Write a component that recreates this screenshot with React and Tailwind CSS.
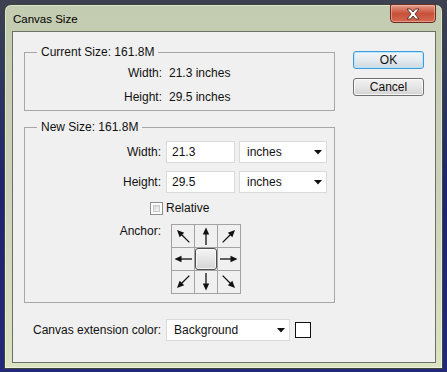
import React from "react";

const font = "font-['Liberation_Sans',Arial,sans-serif]";

function Arrow({ rotate }) {
  return (
    <svg width="22" height="22" viewBox="0 0 22 22">
      <g transform={`rotate(${rotate} 11 11)`}>
        <line x1="11" y1="20" x2="11" y2="7" stroke="#111" strokeWidth="1.3" />
        <polygon points="7.8,9.5 11,2.5 14.2,9.5" fill="#111" />
      </g>
    </svg>
  );
}

function Select({ value, width }) {
  return (
    <div
      className={`${width} h-[22px] flex items-center justify-between pl-[7px] pr-[4px] bg-white border border-[#dadada]`}
    >
      <span>{value}</span>
      <svg width="8" height="5" viewBox="0 0 8 5">
        <polygon points="0,0 8,0 4,4.5" fill="#111" />
      </svg>
    </div>
  );
}

function Field({ label, value, unit }) {
  return (
    <div className="flex items-center">
      <span className="w-[136px] text-right">{label}</span>
      <div className="ml-[5px] w-[69px] h-[22px] flex items-center pl-[5px] bg-white border border-[#dadada]">
        {value}
      </div>
      <div className="ml-[4px]">
        <Select value={unit} width="w-[88px]" />
      </div>
    </div>
  );
}

export default function App() {
  const anchors = [-45, 0, 45, -90, null, 90, -135, 180, 135];

  return (
    <div
      className={`${font} w-[447px] h-[372px] overflow-hidden pt-[4px] pl-[4px] text-[12px] leading-[14px] text-[#111] bg-gradient-to-b from-[#3d4150] via-[#1e2470] to-[#23297a]`}
    >
      <div className="w-[439px] h-[365px] flex flex-col rounded-t-[7px] border border-[#3e4438] bg-gradient-to-b from-[#c3cbb0] via-[#ccd2ba] to-[#dce3c2] shadow-[inset_0_0_0_1px_rgba(255,255,255,0.45)] pl-[7px] pr-[6px] pb-[5px]">
        <div className="h-[26px] flex items-start justify-between">
          <span className="mt-[7px] ml-[1px] text-[11.5px] text-black">Canvas Size</span>
          <div className="w-[46px] h-[19px] -mt-[1px] flex items-center justify-center rounded-b-[4px] rounded-t-[2px] border border-[#6b2a20] bg-gradient-to-b from-[#e39a87] via-[#c8503a] to-[#d46a4f] shadow-[inset_0_0_0_1px_rgba(255,220,210,0.45)]">
            <svg width="14" height="12" viewBox="0 0 14 12">
              <polygon
                points="1,1 4.5,1 7,4 9.5,1 13,1 9,6 13,11 9.5,11 7,8 4.5,11 1,11 5,6"
                fill="#fff"
                stroke="#4a2a25"
                strokeWidth="0.9"
              />
            </svg>
          </div>
        </div>

        <div className="w-[424px] h-[332px] border border-[#6a7064] bg-[#f0f0f0] flex flex-col">
          <div className="flex items-start">
            <div className="ml-[11px] mt-[13px] w-[311px]">
              <fieldset className="border border-[#a7a7a7] pb-[6px] pt-[7px]">
                <legend className="ml-[12px] px-[4px]">Current Size: 161.8M</legend>
                <div className="flex flex-col gap-[10px]">
                  <div className="flex">
                    <span className="w-[137px] text-right">Width:</span>
                    <span className="ml-[7px]">21.3 inches</span>
                  </div>
                  <div className="flex">
                    <span className="w-[137px] text-right">Height:</span>
                    <span className="ml-[7px]">29.5 inches</span>
                  </div>
                </div>
              </fieldset>

              <fieldset className="mt-[9px] border border-[#a7a7a7] pt-[7px] pb-[8px]">
                <legend className="ml-[12px] px-[4px]">New Size: 161.8M</legend>
                <div className="flex flex-col gap-[8px]">
                  <Field label="Width:" value="21.3" unit="inches" />
                  <Field label="Height:" value="29.5" unit="inches" />
                </div>
                <div className="mt-[8px] ml-[125px] flex items-center gap-[3px]">
                  <div className="w-[13px] h-[13px] border border-[#8e8f8f] bg-white p-[2px]">
                    <div className="w-full h-full border border-[#c4c7cc] bg-gradient-to-br from-[#d3d6da] to-[#f7f7f7]" />
                  </div>
                  <span>Relative</span>
                </div>
                <div className="mt-[9px] flex items-start">
                  <span className="w-[136px] text-right">Anchor:</span>
                  <div className="ml-[10px] grid grid-cols-[22px_22px_22px] gap-px p-px bg-[#a3a3a3]">
                    {anchors.map((r, i) => (
                      <div key={i} className="w-[22px] h-[22px] bg-[#f0f0f0] flex items-center justify-center">
                        {r === null ? (
                          <div className="w-[22px] h-[22px] rounded-[3px] border border-[#4f4f4f] bg-gradient-to-b from-[#f5f5f5] to-[#d6d6d6] shadow-[inset_0_0_0_1px_rgba(255,255,255,0.7)]" />
                        ) : (
                          <Arrow rotate={r} />
                        )}
                      </div>
                    ))}
                  </div>
                </div>
              </fieldset>
            </div>

            <div className="ml-[18px] mt-[19px] flex flex-col gap-[9px]">
              <button className="w-[71px] h-[18px] flex items-center justify-center rounded-[3px] border border-[#3c9bd8] bg-gradient-to-b from-[#f2f6f8] via-[#e4ebef] to-[#cfd9df] shadow-[inset_0_0_0_1px_rgba(180,230,255,0.9)] text-[12px] leading-[14px]">
                OK
              </button>
              <button className="w-[71px] h-[18px] flex items-center justify-center rounded-[3px] border border-[#707070] bg-gradient-to-b from-[#f2f2f2] via-[#e6e6e6] to-[#d2d2d2] shadow-[inset_0_0_0_1px_rgba(255,255,255,0.8)] text-[12px] leading-[14px]">
                Cancel
              </button>
            </div>
          </div>

          <div className="mt-[16px] ml-[20px] flex items-center">
            <span>Canvas extension color:</span>
            <div className="ml-[5px]">
              <Select value="Background" width="w-[124px]" />
            </div>
            <div className="ml-[5px] w-[16px] h-[16px] border border-[#111] bg-white" />
          </div>
        </div>
      </div>
    </div>
  );
}
